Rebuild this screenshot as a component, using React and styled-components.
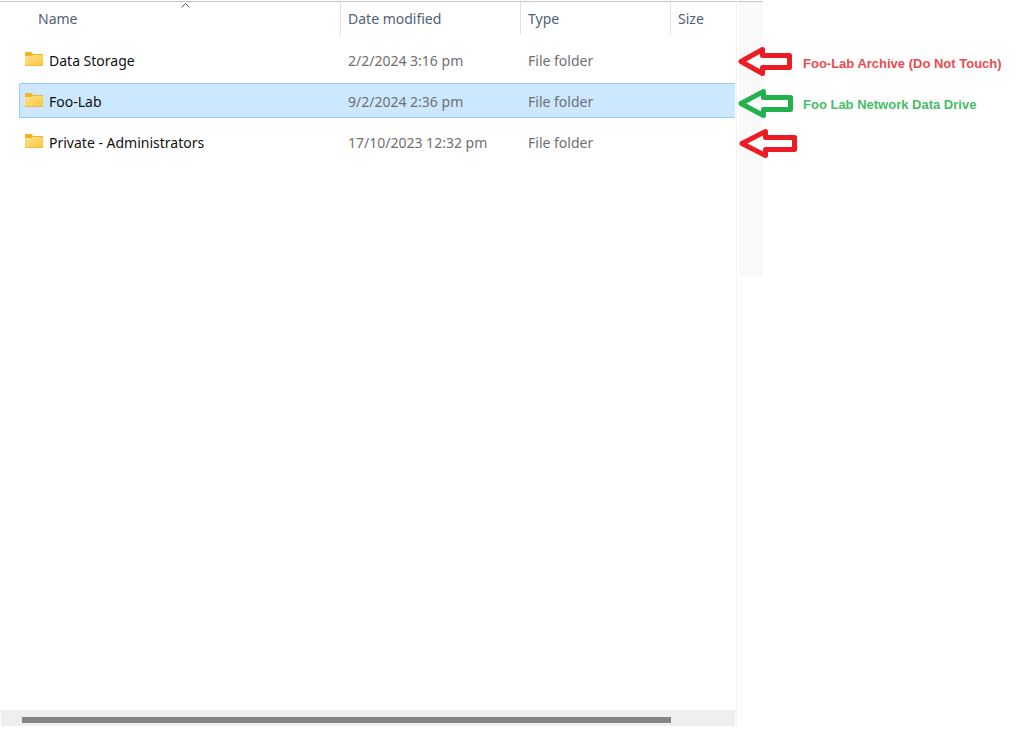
import React from "react";
import styled, { createGlobalStyle } from "styled-components";

const GlobalStyle = createGlobalStyle`
  *, *::before { box-sizing: border-box; }
  body {
    margin: 0;
    background: #fff;
    font-family: "Noto Sans", "Open Sans", sans-serif;
    font-size: 14px;
    line-height: 20px;
  }
`;

const Page = styled.div`
  display: flex;
  min-height: 100vh;
  padding: 1px 0 14px;
`;

const Pane = styled.main`
  flex: 1;
  min-width: 0;
  display: flex;
  flex-direction: column;
  border-top: 1px solid #c3c5c8;
  border-right: 1px solid #f3f3f3;
  padding-right: 1px;
`;

const Listing = styled.div`
  flex: 1;
  padding-left: 19px;
`;

const FileTable = styled.table`
  width: 100%;
  margin-top: -6px;
  table-layout: fixed;
  border-collapse: separate;
  border-spacing: 0 6px;
`;

const Column = styled.col`
  width: ${(p) => p.$width};
`;

const HeaderCell = styled.th`
  position: relative;
  height: 34px;
  padding: 0;
  vertical-align: top;
  text-align: left;
  font-weight: 400;
`;

const HeaderButton = styled.button`
  display: block;
  width: 100%;
  height: 33px;
  padding: 0 0 0 ${(p) => (p.$first ? "19px" : "7px")};
  border: 0;
  border-left: ${(p) => (p.$first ? "0" : "1px solid #e2e2e2")};
  background: none;
  color: #4f6178;
  font: inherit;
  text-align: left;
`;

const SortMark = styled.svg`
  position: absolute;
  top: 0;
  left: 50%;
  display: block;
`;

const FileRow = styled.tr`
  --fill: ${(p) => (p.$selected ? "#cce8ff" : "transparent")};
  --edge: ${(p) => (p.$selected ? "#99cdee" : "transparent")};
`;

const Cell = styled.td`
  height: 35px;
  padding: 2px 0 0 8px;
  border: solid var(--edge);
  border-width: 1px 0;
  background: var(--fill);
  color: #6f6f6f;
  white-space: nowrap;

  &:first-child {
    padding-left: 5px;
    border-left-width: 1px;
    border-radius: 2px 0 0 2px;
    color: #111;
  }
`;

const FileName = styled.span`
  display: flex;
  align-items: center;
  gap: 5px;
`;

const Folder = styled.svg`
  display: block;
  margin-bottom: 4px;
`;

const ScrollTrack = styled.div`
  height: 16px;
  margin-left: 1px;
  padding: 7px 64px 3px 21px;
  background: #efefef;
`;

const ScrollThumb = styled.div`
  height: 6px;
  background: #858585;
`;

const Notes = styled.aside`
  position: relative;
  flex: 0 0 289px;
  padding: 40px 0 0 1px;

  &::before {
    content: "";
    position: absolute;
    top: 0;
    left: 0;
    width: 26px;
    height: 276px;
    border-top: 1px solid #c3c5c8;
    border-left: 2px solid #fff;
    background: #f9f9f9;
  }
`;

const Note = styled.div`
  position: relative;
  display: flex;
  align-items: center;
  gap: 5px;
  height: 41px;
`;

const NoteText = styled.span`
  padding-top: 4px;
  color: ${(p) => p.$color};
  font-family: "Liberation Sans", Arial, sans-serif;
  font-size: 13px;
  font-weight: 700;
  white-space: nowrap;
`;

const FolderIcon = () => (
  <Folder width="19" height="16" viewBox="0 0 19 16" aria-hidden="true">
    <defs>
      <linearGradient id="folder" x1="0" y1="0" x2="1" y2="1">
        <stop offset="0" stopColor="#ffe08a" />
        <stop offset="1" stopColor="#fbc63c" />
      </linearGradient>
    </defs>
    <path d="M0 2Q0 1 1 1H6.500L8 3H18V6H0Z" fill="#f0b429" />
    <path d="M0 5H6L8 4H18V15H0Z" fill="url(#folder)" />
    <path d="M0 14.500H18" stroke="#ecbb48" />
  </Folder>
);

const ARROWS = {
  archive: "M3 16.500L24.500 4.500V10.500H51.500V22.500H24.500V28.500Z",
  network: "M3 17.500L25.500 5.500V11.500H52.500V23.500H25.500V29.500Z",
  admin: "M4 16.500L27.500 4.500V10.500H56.500V22.500H27.500V28.500Z",
};

const Arrow = ({ shape, color }) => (
  <svg width="60" height="33" viewBox="0 0 60 33" aria-hidden="true">
    <path d={ARROWS[shape]} fill="#fff" stroke={color} strokeWidth="5" strokeLinejoin="round" />
  </svg>
);

const files = [
  { name: "Data Storage", date: "2/2/2024 3:16 pm" },
  { name: "Foo-Lab", date: "9/2/2024 2:36 pm", selected: true },
  { name: "Private - Administrators", date: "17/10/2023 12:32 pm" },
];

const notes = [
  { shape: "archive", arrow: "#ed1c24", color: "#ec4a50", text: "Foo-Lab Archive (Do Not Touch)" },
  { shape: "network", arrow: "#22b14c", color: "#45bd69", text: "Foo Lab Network Data Drive" },
  { shape: "admin", arrow: "#ed1c24" },
];

export default function App() {
  return (
    <>
      <GlobalStyle />
      <Page>
        <Pane>
          <Listing>
            <FileTable>
              <colgroup>
                <Column $width="321px" />
                <Column $width="180px" />
                <Column $width="150px" />
                <Column $width="auto" />
              </colgroup>
              <thead>
                <tr>
                  {["Name", "Date modified", "Type", "Size"].map((label, i) => (
                    <HeaderCell key={label} scope="col" aria-sort={i === 0 ? "ascending" : undefined}>
                      <HeaderButton type="button" $first={i === 0}>{label}</HeaderButton>
                      {i === 0 && (
                        <SortMark width="12" height="8" viewBox="0 0 12 8" aria-hidden="true">
                          <path d="M1.500 5.500L5.500 1.500L9.500 5.500" fill="none" stroke="#555" />
                        </SortMark>
                      )}
                    </HeaderCell>
                  ))}
                </tr>
              </thead>
              <tbody>
                {files.map((file) => (
                  <FileRow key={file.name} $selected={file.selected} aria-selected={!!file.selected}>
                    <Cell>
                      <FileName><FolderIcon />{file.name}</FileName>
                    </Cell>
                    <Cell>{file.date}</Cell>
                    <Cell>File folder</Cell>
                    <Cell />
                  </FileRow>
                ))}
              </tbody>
            </FileTable>
          </Listing>
          <ScrollTrack><ScrollThumb /></ScrollTrack>
        </Pane>
        <Notes>
          {notes.map((note) => (
            <Note key={note.shape}>
              <Arrow shape={note.shape} color={note.arrow} />
              {note.text && <NoteText $color={note.color}>{note.text}</NoteText>}
            </Note>
          ))}
        </Notes>
      </Page>
    </>
  );
}
